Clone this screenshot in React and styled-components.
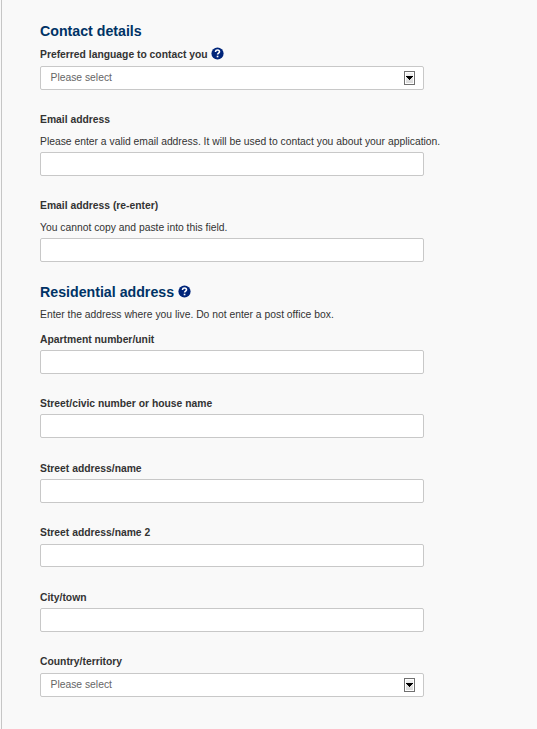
import styled, { createGlobalStyle } from "styled-components";

const GlobalStyle = createGlobalStyle`
    * {
        box-sizing: border-box;
    }

    body {
        margin: 0;
        background-color: #f9f9f9;
        font-family: "Liberation Sans", Arial, sans-serif;
    }
`;

const Page = styled.main`
    height: 729px;
    margin-left: 1px;
    padding: 22px 0 0 38px;
    border-left: 1px solid #c6c6c6;
    overflow: hidden;
    color: #333;
`;

const Title = styled.h2`
    display: flex;
    align-items: flex-start;
    gap: 4px;
    margin: ${props => props.$top || 0}px 0 0;
    height: 18px;
    font-size: 14.2px;
    line-height: 18px;
    color: #003366;
    white-space: nowrap;
`;

const Field = styled.div`
    width: 384px;
    margin-top: ${props => props.$top}px;
`;

const Label = styled.label`
    display: flex;
    align-items: flex-start;
    gap: 3px;
    height: 14px;
    font-size: 10.34px;
    font-weight: bold;
    line-height: 14px;
    white-space: nowrap;
`;

const Help = styled.p`
    margin: ${props => props.$top}px 0 0;
    height: 14px;
    font-size: 10.34px;
    line-height: 14px;
    white-space: nowrap;
`;

const Input = styled.input`
    display: block;
    width: 100%;
    height: ${props => props.$height || 24}px;
    margin-top: ${props => props.$top}px;
    padding: 0 10px;
    border: 1px solid #c8c8c8;
    border-radius: 2px;
    background-color: #fff;
    outline: none;
`;

const Select = styled.div`
    display: flex;
    align-items: center;
    justify-content: space-between;
    height: 24px;
    margin-top: ${props => props.$top}px;
    padding: 0 8px 0 9.5px;
    border: 1px solid #c8c8c8;
    border-radius: 2px;
    background-color: #fff;
    font-size: 10.34px;
    line-height: 22px;
    color: #666;
`;

const Arrow = styled.span`
    display: flex;
    align-items: center;
    justify-content: center;
    width: 11px;
    height: 14px;
    border: 1px solid #707070;
    background: linear-gradient(#f4f4f4, #d8d8d8);
    box-shadow: inset 0 0 0 1px #fff;
`;

const Icon = styled.svg`
    flex: none;
    margin-top: ${props => props.$top}px;
`;

const HelpIcon = ({ top }) => (
    <Icon $top={top} width="13" height="13" viewBox="0 0 13 13">
        <circle cx="6.5" cy="6.5" r="6.1" fill="#00257a" />
        <path d="M4.5 5V4.7C4.6 3.5 5.4 3 6.5 3s2 .6 2 1.7c0 1.4-1.9 1.4-1.9 2.9" fill="none" stroke="#fff" strokeWidth="1.6" />
        <path d="M5.7 8.7h1.7v1.6H5.7z" fill="#fff" />
    </Icon>
);

const Dropdown = ({ top }) => (
    <Select $top={top}>
        Please select
        <Arrow>
            <svg width="7" height="4" viewBox="0 0 7 4" shapeRendering="crispEdges">
                <path d="M0 0h7v1H6v1H5v1H4v1H3V3H2V2H1V1H0z" />
            </svg>
        </Arrow>
    </Select>
);

export default function App() {
    return (
        <>
            <GlobalStyle />
            <Page>
                <Title>Contact details</Title>
                <Field $top={8}>
                    <Label>Preferred language to contact you <HelpIcon top={-1} /></Label>
                    <Dropdown top={4} />
                </Field>
                <Field $top={23}>
                    <Label>Email address</Label>
                    <Help $top={8}>
                        Please enter a valid email address. It will be used to contact you about your application.
                    </Help>
                    <Input $top={3} />
                </Field>
                <Field $top={23}>
                    <Label>Email address (re-enter)</Label>
                    <Help $top={8}>You cannot copy and paste into this field.</Help>
                    <Input $top={3} />
                </Field>
                <Title $top={21}>Residential address <HelpIcon top={2} /></Title>
                <Help $top={7}>Enter the address where you live. Do not enter a post office box.</Help>
                <Field $top={11}>
                    <Label>Apartment number/unit</Label>
                    <Input $top={3} />
                </Field>
                <Field $top={23}>
                    <Label>Street/civic number or house name</Label>
                    <Input $top={3} />
                </Field>
                <Field $top={24}>
                    <Label>Street address/name</Label>
                    <Input $top={3} />
                </Field>
                <Field $top={23}>
                    <Label>Street address/name 2</Label>
                    <Input $top={4} $height={23} />
                </Field>
                <Field $top={24}>
                    <Label>City/town</Label>
                    <Input $top={3} />
                </Field>
                <Field $top={23}>
                    <Label>Country/territory</Label>
                    <Dropdown top={4} />
                </Field>
            </Page>
        </>
    );
}
